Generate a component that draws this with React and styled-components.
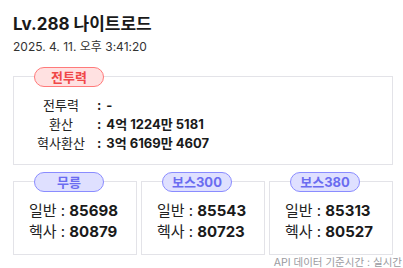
import React from "react";
import styled, { createGlobalStyle } from "styled-components";

const GlobalStyle = createGlobalStyle`
  body {
    margin: 0;
    background: #ffffff;
    font-family: "Inter", "Noto Sans CJK KR", sans-serif;
    color: #1a1a1a;
  }
`;

const Page = styled.div`
  width: 403px;
  height: 268px;
  padding: 12px 1px 0 13px;
  box-sizing: border-box;
  overflow: hidden;
`;

const Title = styled.h1`
  margin: 0;
  font-size: 17px;
  line-height: 24px;
  font-weight: 700;
  color: #1a1a1a;
`;

const DateLine = styled.div`
  margin-top: 3px;
  font-size: 12px;
  line-height: 16px;
  color: #333;
`;

const Panel = styled.section`
  position: relative;
  width: 380px;
  box-sizing: border-box;
  border: 1px solid #e3e3e8;
  padding: ${({ $pad }) => $pad};
`;

const TopPanel = styled(Panel)`
  margin-top: 21px;
`;

const Badge = styled.span`
  position: absolute;
  top: -10px;
  left: 20px;
  width: 70px;
  height: 20px;
  box-sizing: border-box;
  border-radius: 10px;
  border: 1px solid ${({ $tone }) => ($tone === "red" ? "#ff7a7a" : "#8a8cff")};
  background: ${({ $tone }) => ($tone === "red" ? "#ffe1e1" : "#dfe0ff")};
  color: ${({ $tone }) => ($tone === "red" ? "#f04848" : "#6a6cf0")};
  font-size: 13px;
  font-weight: 700;
  line-height: 18px;
  text-align: center;
`;

const StatRow = styled.div`
  display: flex;
  align-items: center;
  font-size: 13px;
  line-height: 19px;
`;

const StatLabel = styled.span`
  width: 52px;
  text-align: center;
  color: #222;
`;

const Colon = styled.span`
  margin-left: 10px;
  margin-right: 5px;
  font-weight: 700;
`;

const StatValue = styled.span`
  font-weight: 700;
  color: #1a1a1a;
`;

const CardGrid = styled.div`
  display: grid;
  grid-template-columns: repeat(3, 1fr);
  gap: 4px;
  width: 380px;
  margin-top: 16px;
`;

const Card = styled(Panel)`
  width: auto;
  height: 74px;
`;

const CardRow = styled.div`
  font-size: 15px;
  line-height: 21px;
  color: #222;

  b {
    font-weight: 700;
    color: #1a1a1a;
  }
`;

const Footer = styled.div`
  text-align: right;
  font-size: 10.5px;
  line-height: 13px;
  color: #9a9aa0;
  margin-top: 1px;
`;

const stats = [
  { label: "전투력", value: "-" },
  { label: "환산", value: "4억 1224만 5181" },
  { label: "혁사환산", value: "3억 6169만 4607" },
];

const cards = [
  { name: "무릉", normal: "85698", hexa: "80879" },
  { name: "보스300", normal: "85543", hexa: "80723" },
  { name: "보스380", normal: "85313", hexa: "80527" },
];

export default function App() {
  return (
    <>
      <GlobalStyle />
      <Page>
        <Title>Lv.288 나이트로드</Title>
        <DateLine>2025. 4. 11. 오후 3:41:20</DateLine>

        <TopPanel $pad="19px 0 11px 21px">
          <Badge $tone="red">전투력</Badge>
          {stats.map((s) => (
            <StatRow key={s.label}>
              <StatLabel>{s.label}</StatLabel>
              <Colon>:</Colon>
              <StatValue>{s.value}</StatValue>
            </StatRow>
          ))}
        </TopPanel>

        <CardGrid>
          {cards.map((c) => (
            <Card key={c.name} $pad="18px 0 0 15px">
              <Badge $tone="blue">{c.name}</Badge>
              <CardRow>
                일반 : <b>{c.normal}</b>
              </CardRow>
              <CardRow>
                헥사 : <b>{c.hexa}</b>
              </CardRow>
            </Card>
          ))}
        </CardGrid>

        <Footer>API 데이터 기준시간 : 실시간</Footer>
      </Page>
    </>
  );
}
